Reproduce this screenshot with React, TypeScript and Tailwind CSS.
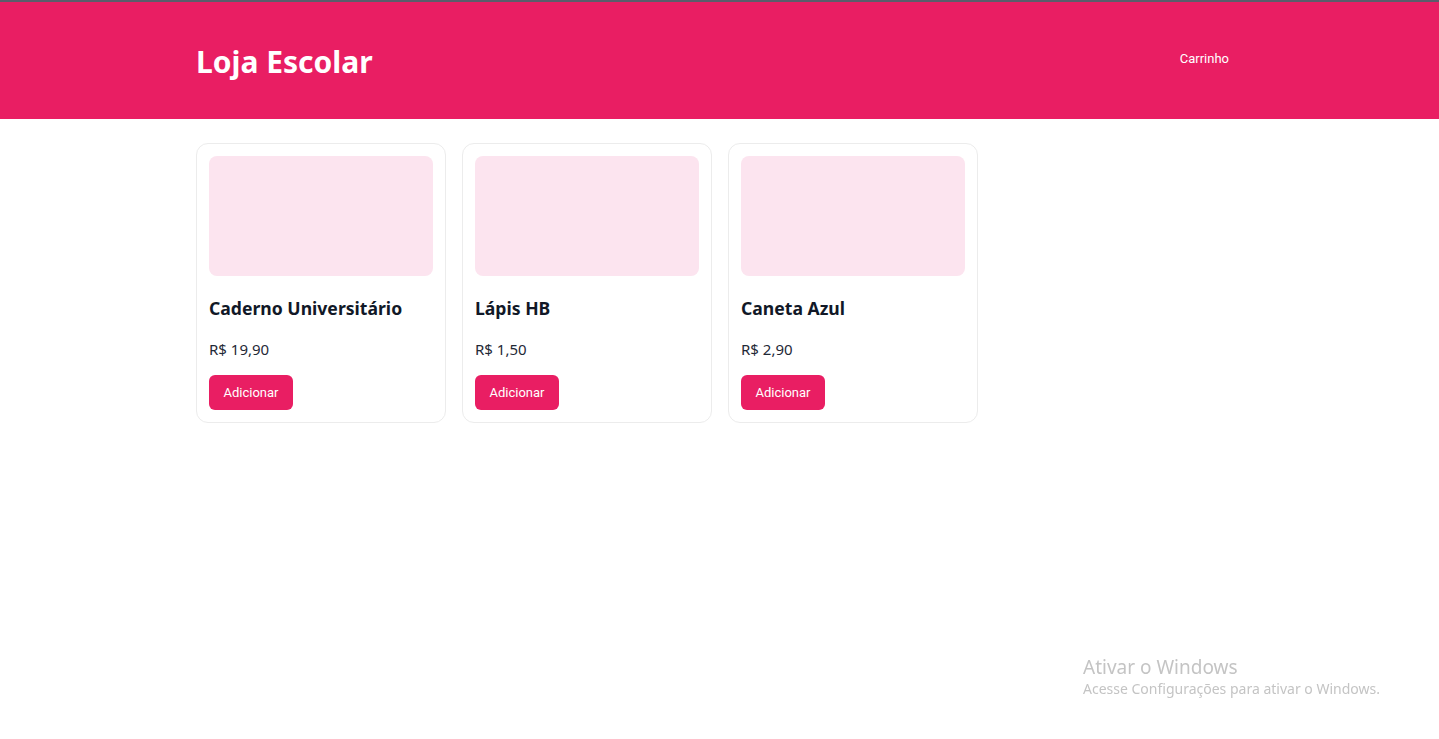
const products = [
  { name: "Caderno Universitário", price: "R$ 19,90" },
  { name: "Lápis HB", price: "R$ 1,50" },
  { name: "Caneta Azul", price: "R$ 2,90" },
];

function ProductCard({ name, price }: { name: string; price: string }) {
  return (
    <div className="flex flex-col rounded-xl border border-[#ececec] bg-white p-3">
      <div className="h-[120px] rounded-lg bg-[#fce4ef]" />
      <h3 className="mt-5 text-[17.6px] font-bold leading-6 text-[#111827]">{name}</h3>
      <p className="mt-[19px] text-[15px] leading-5 text-[#1f2937]">{price}</p>
      <div className="mt-4">
        <button className="h-[35px] w-[84px] rounded-md bg-[#e91e63] font-['Roboto',Arial,sans-serif] text-[13px] text-white">
          Adicionar
        </button>
      </div>
    </div>
  );
}

export default function App() {
  return (
    <div className="min-h-[739px] bg-white font-['Noto_Sans',sans-serif]">
      <div className="h-[2px] bg-[#5a5d6b]" />
      <header className="bg-[#e91e63]">
        <div className="mx-auto flex h-[117px] w-[1047px] items-center justify-between">
          <h1 className="pt-[2px] text-[30px] font-bold text-white">Loja Escolar</h1>
          <button className="px-[14px] pb-[3px] font-['Roboto',Arial,sans-serif] text-[13px] text-white">
            Carrinho
          </button>
        </div>
      </header>

      <main className="mx-auto mt-6 grid w-[1047px] grid-cols-[repeat(3,250px)] gap-4">
        {products.map((p) => (
          <ProductCard key={p.name} name={p.name} price={p.price} />
        ))}
      </main>

      <div className="pointer-events-none fixed left-[1083px] top-[655px] text-[#c4c4c4]">
        <div className="text-[19px] leading-6">Ativar o Windows</div>
        <div className="text-[14px] leading-5">Acesse Configurações para ativar o Windows.</div>
      </div>
    </div>
  );
}
